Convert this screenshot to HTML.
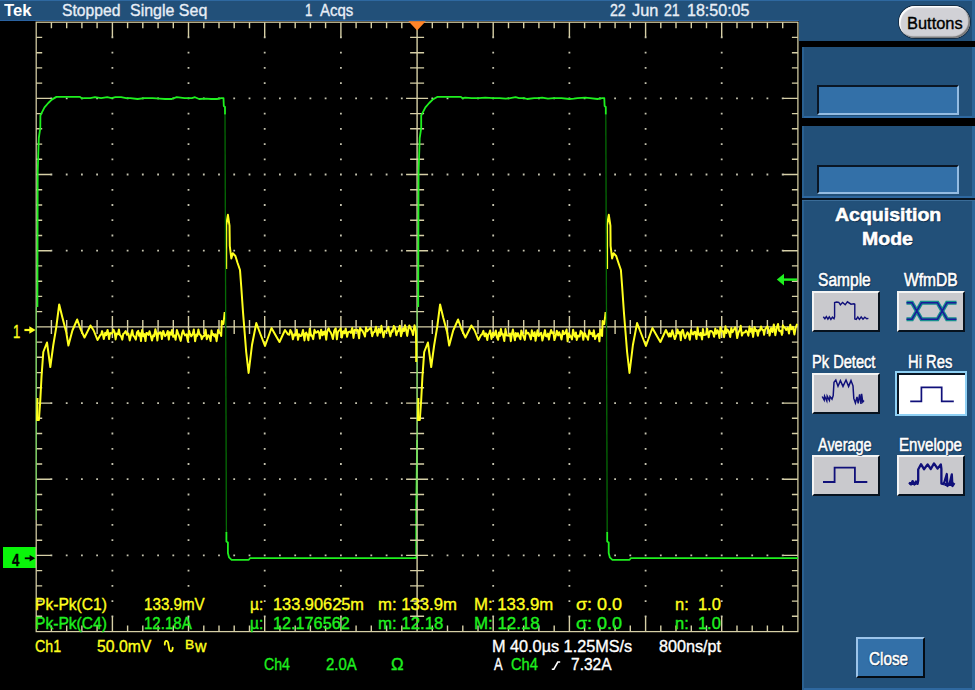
<!DOCTYPE html>
<html lang="en"><head><meta charset="utf-8"><title>Tek scope - Acquisition Mode</title>
<style>
html,body{margin:0;padding:0;background:#000;}
#s{position:relative;width:975px;height:690px;overflow:hidden;background:#000;
font-family:"Liberation Sans","DejaVu Sans",sans-serif;}
#s header,#s main,#s aside{display:block;position:static;margin:0;padding:0;}
#s div,#s span,#s svg{position:absolute;}
.t{white-space:pre;line-height:normal;transform-origin:0 50%;-webkit-text-stroke-width:0.35px;}
.p{background:#225079;box-shadow:inset 2px 0 0 #2a6090,inset -3px 0 0 #2c6598,inset 0 -2px 0 #2e68a0;}
.ph{background:#225079;}
.in{background:#3370a8;border-top:2px solid #0a1624;border-left:2px solid #0a1624;border-bottom:2px solid #94bce2;border-right:2px solid #94bce2;box-sizing:border-box;}
.b{box-sizing:content-box;}
.b svg{left:0;top:0;}
.g{background:#c9c9cd;border-top:2px solid #f4f4f4;border-left:2px solid #f4f4f4;border-bottom:2px solid #07121e;border-right:2px solid #07121e;}
</style></head><body>
<div id="s">
<header>
<div class="ph" style="left:0;top:0;width:975px;height:21.3px;box-shadow:inset 0 1px 0 #2e68a0,inset 0 -1px 0 #2a62a0;"></div>
<span class="t" id="tek" style="left:3.74px;top:1.7px;font-size:16px;color:#fff;font-weight:700;-webkit-text-stroke-width:0;transform:scaleX(1.0385);">Tek</span>
<span class="t" id="stop" style="left:61.52px;top:1.3px;font-size:16.5px;color:#e8eef6;transform:scaleX(0.9500);">Stopped</span>
<span class="t" id="sseq" style="left:129.52px;top:1.3px;font-size:16.5px;color:#e8eef6;transform:scaleX(0.9682);">Single Seq</span>
<span class="t" id="acq0" style="left:304.70px;top:1.3px;font-size:16.5px;color:#e8eef6;transform:scaleX(0.8000);">1</span>
<span class="t" id="acq" style="left:320.23px;top:1.3px;font-size:16.5px;color:#e8eef6;transform:scaleX(0.9041);">Acqs</span>
<span class="t" id="date1" style="left:610.27px;top:1.3px;font-size:16.5px;color:#e8eef6;transform:scaleX(0.8580);">22</span>
<span class="t" id="date2" style="left:632.00px;top:1.3px;font-size:16.5px;color:#e8eef6;transform:scaleX(0.9903);">Jun</span>
<span class="t" id="date3" style="left:663.57px;top:1.3px;font-size:16.5px;color:#e8eef6;transform:scaleX(0.8580);">21</span>
<span class="t" id="date4" style="left:686.83px;top:1.3px;font-size:16.5px;color:#e8eef6;transform:scaleX(0.9721);">18:50:05</span>
</header>
<main>
<div style="left:3px;top:546.8px;width:33px;height:21.6px;background:#0af50a;"></div>
<svg width="975" height="690" viewBox="0 0 975 690" style="left:0;top:0;">
<polyline points="414.1,558.2 416.4,558.2 416.2,552.2 416.2,505 417.1,440" fill="none" stroke="#1ff01f" stroke-width="1.7"/>
<path d="M111.5 37.4h1.8M111.5 52.7h1.8M111.5 67.9h1.8M111.5 83.1h1.8M111.5 98.4h1.8M111.5 113.6h1.8M111.5 128.8h1.8M111.5 144.1h1.8M111.5 159.3h1.8M111.5 174.5h1.8M111.5 189.8h1.8M111.5 205h1.8M111.5 220.2h1.8M111.5 235.5h1.8M111.5 250.7h1.8M111.5 265.9h1.8M111.5 281.2h1.8M111.5 296.4h1.8M111.5 311.6h1.8M111.5 326.9h1.8M111.5 342.1h1.8M111.5 357.3h1.8M111.5 372.6h1.8M111.5 387.8h1.8M111.5 403.1h1.8M111.5 418.3h1.8M111.5 433.5h1.8M111.5 448.8h1.8M111.5 464h1.8M111.5 479.2h1.8M111.5 494.5h1.8M111.5 509.7h1.8M111.5 524.9h1.8M111.5 540.2h1.8M111.5 555.4h1.8M111.5 570.6h1.8M111.5 585.9h1.8M111.5 601.1h1.8M111.5 616.3h1.8M187.6 37.4h1.8M187.6 52.7h1.8M187.6 67.9h1.8M187.6 83.1h1.8M187.6 98.4h1.8M187.6 113.6h1.8M187.6 128.8h1.8M187.6 144.1h1.8M187.6 159.3h1.8M187.6 174.5h1.8M187.6 189.8h1.8M187.6 205h1.8M187.6 220.2h1.8M187.6 235.5h1.8M187.6 250.7h1.8M187.6 265.9h1.8M187.6 281.2h1.8M187.6 296.4h1.8M187.6 311.6h1.8M187.6 326.9h1.8M187.6 342.1h1.8M187.6 357.3h1.8M187.6 372.6h1.8M187.6 387.8h1.8M187.6 403.1h1.8M187.6 418.3h1.8M187.6 433.5h1.8M187.6 448.8h1.8M187.6 464h1.8M187.6 479.2h1.8M187.6 494.5h1.8M187.6 509.7h1.8M187.6 524.9h1.8M187.6 540.2h1.8M187.6 555.4h1.8M187.6 570.6h1.8M187.6 585.9h1.8M187.6 601.1h1.8M187.6 616.3h1.8M263.8 37.4h1.8M263.8 52.7h1.8M263.8 67.9h1.8M263.8 83.1h1.8M263.8 98.4h1.8M263.8 113.6h1.8M263.8 128.8h1.8M263.8 144.1h1.8M263.8 159.3h1.8M263.8 174.5h1.8M263.8 189.8h1.8M263.8 205h1.8M263.8 220.2h1.8M263.8 235.5h1.8M263.8 250.7h1.8M263.8 265.9h1.8M263.8 281.2h1.8M263.8 296.4h1.8M263.8 311.6h1.8M263.8 326.9h1.8M263.8 342.1h1.8M263.8 357.3h1.8M263.8 372.6h1.8M263.8 387.8h1.8M263.8 403.1h1.8M263.8 418.3h1.8M263.8 433.5h1.8M263.8 448.8h1.8M263.8 464h1.8M263.8 479.2h1.8M263.8 494.5h1.8M263.8 509.7h1.8M263.8 524.9h1.8M263.8 540.2h1.8M263.8 555.4h1.8M263.8 570.6h1.8M263.8 585.9h1.8M263.8 601.1h1.8M263.8 616.3h1.8M340 37.4h1.8M340 52.7h1.8M340 67.9h1.8M340 83.1h1.8M340 98.4h1.8M340 113.6h1.8M340 128.8h1.8M340 144.1h1.8M340 159.3h1.8M340 174.5h1.8M340 189.8h1.8M340 205h1.8M340 220.2h1.8M340 235.5h1.8M340 250.7h1.8M340 265.9h1.8M340 281.2h1.8M340 296.4h1.8M340 311.6h1.8M340 326.9h1.8M340 342.1h1.8M340 357.3h1.8M340 372.6h1.8M340 387.8h1.8M340 403.1h1.8M340 418.3h1.8M340 433.5h1.8M340 448.8h1.8M340 464h1.8M340 479.2h1.8M340 494.5h1.8M340 509.7h1.8M340 524.9h1.8M340 540.2h1.8M340 555.4h1.8M340 570.6h1.8M340 585.9h1.8M340 601.1h1.8M340 616.3h1.8M492.3 37.4h1.8M492.3 52.7h1.8M492.3 67.9h1.8M492.3 83.1h1.8M492.3 98.4h1.8M492.3 113.6h1.8M492.3 128.8h1.8M492.3 144.1h1.8M492.3 159.3h1.8M492.3 174.5h1.8M492.3 189.8h1.8M492.3 205h1.8M492.3 220.2h1.8M492.3 235.5h1.8M492.3 250.7h1.8M492.3 265.9h1.8M492.3 281.2h1.8M492.3 296.4h1.8M492.3 311.6h1.8M492.3 326.9h1.8M492.3 342.1h1.8M492.3 357.3h1.8M492.3 372.6h1.8M492.3 387.8h1.8M492.3 403.1h1.8M492.3 418.3h1.8M492.3 433.5h1.8M492.3 448.8h1.8M492.3 464h1.8M492.3 479.2h1.8M492.3 494.5h1.8M492.3 509.7h1.8M492.3 524.9h1.8M492.3 540.2h1.8M492.3 555.4h1.8M492.3 570.6h1.8M492.3 585.9h1.8M492.3 601.1h1.8M492.3 616.3h1.8M568.5 37.4h1.8M568.5 52.7h1.8M568.5 67.9h1.8M568.5 83.1h1.8M568.5 98.4h1.8M568.5 113.6h1.8M568.5 128.8h1.8M568.5 144.1h1.8M568.5 159.3h1.8M568.5 174.5h1.8M568.5 189.8h1.8M568.5 205h1.8M568.5 220.2h1.8M568.5 235.5h1.8M568.5 250.7h1.8M568.5 265.9h1.8M568.5 281.2h1.8M568.5 296.4h1.8M568.5 311.6h1.8M568.5 326.9h1.8M568.5 342.1h1.8M568.5 357.3h1.8M568.5 372.6h1.8M568.5 387.8h1.8M568.5 403.1h1.8M568.5 418.3h1.8M568.5 433.5h1.8M568.5 448.8h1.8M568.5 464h1.8M568.5 479.2h1.8M568.5 494.5h1.8M568.5 509.7h1.8M568.5 524.9h1.8M568.5 540.2h1.8M568.5 555.4h1.8M568.5 570.6h1.8M568.5 585.9h1.8M568.5 601.1h1.8M568.5 616.3h1.8M644.7 37.4h1.8M644.7 52.7h1.8M644.7 67.9h1.8M644.7 83.1h1.8M644.7 98.4h1.8M644.7 113.6h1.8M644.7 128.8h1.8M644.7 144.1h1.8M644.7 159.3h1.8M644.7 174.5h1.8M644.7 189.8h1.8M644.7 205h1.8M644.7 220.2h1.8M644.7 235.5h1.8M644.7 250.7h1.8M644.7 265.9h1.8M644.7 281.2h1.8M644.7 296.4h1.8M644.7 311.6h1.8M644.7 326.9h1.8M644.7 342.1h1.8M644.7 357.3h1.8M644.7 372.6h1.8M644.7 387.8h1.8M644.7 403.1h1.8M644.7 418.3h1.8M644.7 433.5h1.8M644.7 448.8h1.8M644.7 464h1.8M644.7 479.2h1.8M644.7 494.5h1.8M644.7 509.7h1.8M644.7 524.9h1.8M644.7 540.2h1.8M644.7 555.4h1.8M644.7 570.6h1.8M644.7 585.9h1.8M644.7 601.1h1.8M644.7 616.3h1.8M720.8 37.4h1.8M720.8 52.7h1.8M720.8 67.9h1.8M720.8 83.1h1.8M720.8 98.4h1.8M720.8 113.6h1.8M720.8 128.8h1.8M720.8 144.1h1.8M720.8 159.3h1.8M720.8 174.5h1.8M720.8 189.8h1.8M720.8 205h1.8M720.8 220.2h1.8M720.8 235.5h1.8M720.8 250.7h1.8M720.8 265.9h1.8M720.8 281.2h1.8M720.8 296.4h1.8M720.8 311.6h1.8M720.8 326.9h1.8M720.8 342.1h1.8M720.8 357.3h1.8M720.8 372.6h1.8M720.8 387.8h1.8M720.8 403.1h1.8M720.8 418.3h1.8M720.8 433.5h1.8M720.8 448.8h1.8M720.8 464h1.8M720.8 479.2h1.8M720.8 494.5h1.8M720.8 509.7h1.8M720.8 524.9h1.8M720.8 540.2h1.8M720.8 555.4h1.8M720.8 570.6h1.8M720.8 585.9h1.8M720.8 601.1h1.8M720.8 616.3h1.8M50.5 98.4h1.8M65.8 98.4h1.8M81 98.4h1.8M96.2 98.4h1.8M126.7 98.4h1.8M141.9 98.4h1.8M157.2 98.4h1.8M172.4 98.4h1.8M202.9 98.4h1.8M218.1 98.4h1.8M233.3 98.4h1.8M248.6 98.4h1.8M279 98.4h1.8M294.3 98.4h1.8M309.5 98.4h1.8M324.7 98.4h1.8M355.2 98.4h1.8M370.4 98.4h1.8M385.7 98.4h1.8M400.9 98.4h1.8M431.4 98.4h1.8M446.6 98.4h1.8M461.9 98.4h1.8M477.1 98.4h1.8M507.6 98.4h1.8M522.8 98.4h1.8M538 98.4h1.8M553.3 98.4h1.8M583.7 98.4h1.8M599 98.4h1.8M614.2 98.4h1.8M629.4 98.4h1.8M659.9 98.4h1.8M675.1 98.4h1.8M690.4 98.4h1.8M705.6 98.4h1.8M736.1 98.4h1.8M751.3 98.4h1.8M766.5 98.4h1.8M781.8 98.4h1.8M50.5 174.5h1.8M65.8 174.5h1.8M81 174.5h1.8M96.2 174.5h1.8M126.7 174.5h1.8M141.9 174.5h1.8M157.2 174.5h1.8M172.4 174.5h1.8M202.9 174.5h1.8M218.1 174.5h1.8M233.3 174.5h1.8M248.6 174.5h1.8M279 174.5h1.8M294.3 174.5h1.8M309.5 174.5h1.8M324.7 174.5h1.8M355.2 174.5h1.8M370.4 174.5h1.8M385.7 174.5h1.8M400.9 174.5h1.8M431.4 174.5h1.8M446.6 174.5h1.8M461.9 174.5h1.8M477.1 174.5h1.8M507.6 174.5h1.8M522.8 174.5h1.8M538 174.5h1.8M553.3 174.5h1.8M583.7 174.5h1.8M599 174.5h1.8M614.2 174.5h1.8M629.4 174.5h1.8M659.9 174.5h1.8M675.1 174.5h1.8M690.4 174.5h1.8M705.6 174.5h1.8M736.1 174.5h1.8M751.3 174.5h1.8M766.5 174.5h1.8M781.8 174.5h1.8M50.5 250.7h1.8M65.8 250.7h1.8M81 250.7h1.8M96.2 250.7h1.8M126.7 250.7h1.8M141.9 250.7h1.8M157.2 250.7h1.8M172.4 250.7h1.8M202.9 250.7h1.8M218.1 250.7h1.8M233.3 250.7h1.8M248.6 250.7h1.8M279 250.7h1.8M294.3 250.7h1.8M309.5 250.7h1.8M324.7 250.7h1.8M355.2 250.7h1.8M370.4 250.7h1.8M385.7 250.7h1.8M400.9 250.7h1.8M431.4 250.7h1.8M446.6 250.7h1.8M461.9 250.7h1.8M477.1 250.7h1.8M507.6 250.7h1.8M522.8 250.7h1.8M538 250.7h1.8M553.3 250.7h1.8M583.7 250.7h1.8M599 250.7h1.8M614.2 250.7h1.8M629.4 250.7h1.8M659.9 250.7h1.8M675.1 250.7h1.8M690.4 250.7h1.8M705.6 250.7h1.8M736.1 250.7h1.8M751.3 250.7h1.8M766.5 250.7h1.8M781.8 250.7h1.8M50.5 403.1h1.8M65.8 403.1h1.8M81 403.1h1.8M96.2 403.1h1.8M126.7 403.1h1.8M141.9 403.1h1.8M157.2 403.1h1.8M172.4 403.1h1.8M202.9 403.1h1.8M218.1 403.1h1.8M233.3 403.1h1.8M248.6 403.1h1.8M279 403.1h1.8M294.3 403.1h1.8M309.5 403.1h1.8M324.7 403.1h1.8M355.2 403.1h1.8M370.4 403.1h1.8M385.7 403.1h1.8M400.9 403.1h1.8M431.4 403.1h1.8M446.6 403.1h1.8M461.9 403.1h1.8M477.1 403.1h1.8M507.6 403.1h1.8M522.8 403.1h1.8M538 403.1h1.8M553.3 403.1h1.8M583.7 403.1h1.8M599 403.1h1.8M614.2 403.1h1.8M629.4 403.1h1.8M659.9 403.1h1.8M675.1 403.1h1.8M690.4 403.1h1.8M705.6 403.1h1.8M736.1 403.1h1.8M751.3 403.1h1.8M766.5 403.1h1.8M781.8 403.1h1.8M50.5 479.2h1.8M65.8 479.2h1.8M81 479.2h1.8M96.2 479.2h1.8M126.7 479.2h1.8M141.9 479.2h1.8M157.2 479.2h1.8M172.4 479.2h1.8M202.9 479.2h1.8M218.1 479.2h1.8M233.3 479.2h1.8M248.6 479.2h1.8M279 479.2h1.8M294.3 479.2h1.8M309.5 479.2h1.8M324.7 479.2h1.8M355.2 479.2h1.8M370.4 479.2h1.8M385.7 479.2h1.8M400.9 479.2h1.8M431.4 479.2h1.8M446.6 479.2h1.8M461.9 479.2h1.8M477.1 479.2h1.8M507.6 479.2h1.8M522.8 479.2h1.8M538 479.2h1.8M553.3 479.2h1.8M583.7 479.2h1.8M599 479.2h1.8M614.2 479.2h1.8M629.4 479.2h1.8M659.9 479.2h1.8M675.1 479.2h1.8M690.4 479.2h1.8M705.6 479.2h1.8M736.1 479.2h1.8M751.3 479.2h1.8M766.5 479.2h1.8M781.8 479.2h1.8M50.5 555.4h1.8M65.8 555.4h1.8M81 555.4h1.8M96.2 555.4h1.8M126.7 555.4h1.8M141.9 555.4h1.8M157.2 555.4h1.8M172.4 555.4h1.8M202.9 555.4h1.8M218.1 555.4h1.8M233.3 555.4h1.8M248.6 555.4h1.8M279 555.4h1.8M294.3 555.4h1.8M309.5 555.4h1.8M324.7 555.4h1.8M355.2 555.4h1.8M370.4 555.4h1.8M385.7 555.4h1.8M400.9 555.4h1.8M431.4 555.4h1.8M446.6 555.4h1.8M461.9 555.4h1.8M477.1 555.4h1.8M507.6 555.4h1.8M522.8 555.4h1.8M538 555.4h1.8M553.3 555.4h1.8M583.7 555.4h1.8M599 555.4h1.8M614.2 555.4h1.8M629.4 555.4h1.8M659.9 555.4h1.8M675.1 555.4h1.8M690.4 555.4h1.8M705.6 555.4h1.8M736.1 555.4h1.8M751.3 555.4h1.8M766.5 555.4h1.8M781.8 555.4h1.8" stroke="#c4c2ae" stroke-width="1.8" fill="none"/>
<rect x="36.2" y="22.2" width="761.7" height="609.4" fill="none" stroke="#d6cfa6" stroke-width="1.25"/>
<path d="M417.1 22.2V631.6M36.2 326.9H797.9M51.4 22.2v6M51.4 631.6v-6M51.4 319.9v14M66.7 22.2v6M66.7 631.6v-6M66.7 319.9v14M81.9 22.2v6M81.9 631.6v-6M81.9 319.9v14M97.1 22.2v6M97.1 631.6v-6M97.1 319.9v14M112.4 22.2v15M112.4 631.6v-15M112.4 315.9v22M127.6 22.2v6M127.6 631.6v-6M127.6 319.9v14M142.8 22.2v6M142.8 631.6v-6M142.8 319.9v14M158.1 22.2v6M158.1 631.6v-6M158.1 319.9v14M173.3 22.2v6M173.3 631.6v-6M173.3 319.9v14M188.5 22.2v15M188.5 631.6v-15M188.5 315.9v22M203.8 22.2v6M203.8 631.6v-6M203.8 319.9v14M219 22.2v6M219 631.6v-6M219 319.9v14M234.2 22.2v6M234.2 631.6v-6M234.2 319.9v14M249.5 22.2v6M249.5 631.6v-6M249.5 319.9v14M264.7 22.2v15M264.7 631.6v-15M264.7 315.9v22M279.9 22.2v6M279.9 631.6v-6M279.9 319.9v14M295.2 22.2v6M295.2 631.6v-6M295.2 319.9v14M310.4 22.2v6M310.4 631.6v-6M310.4 319.9v14M325.6 22.2v6M325.6 631.6v-6M325.6 319.9v14M340.9 22.2v15M340.9 631.6v-15M340.9 315.9v22M356.1 22.2v6M356.1 631.6v-6M356.1 319.9v14M371.3 22.2v6M371.3 631.6v-6M371.3 319.9v14M386.6 22.2v6M386.6 631.6v-6M386.6 319.9v14M401.8 22.2v6M401.8 631.6v-6M401.8 319.9v14M417.1 22.2v15M417.1 631.6v-15M417.1 315.9v22M432.3 22.2v6M432.3 631.6v-6M432.3 319.9v14M447.5 22.2v6M447.5 631.6v-6M447.5 319.9v14M462.8 22.2v6M462.8 631.6v-6M462.8 319.9v14M478 22.2v6M478 631.6v-6M478 319.9v14M493.2 22.2v15M493.2 631.6v-15M493.2 315.9v22M508.5 22.2v6M508.5 631.6v-6M508.5 319.9v14M523.7 22.2v6M523.7 631.6v-6M523.7 319.9v14M538.9 22.2v6M538.9 631.6v-6M538.9 319.9v14M554.2 22.2v6M554.2 631.6v-6M554.2 319.9v14M569.4 22.2v15M569.4 631.6v-15M569.4 315.9v22M584.6 22.2v6M584.6 631.6v-6M584.6 319.9v14M599.9 22.2v6M599.9 631.6v-6M599.9 319.9v14M615.1 22.2v6M615.1 631.6v-6M615.1 319.9v14M630.3 22.2v6M630.3 631.6v-6M630.3 319.9v14M645.6 22.2v15M645.6 631.6v-15M645.6 315.9v22M660.8 22.2v6M660.8 631.6v-6M660.8 319.9v14M676 22.2v6M676 631.6v-6M676 319.9v14M691.3 22.2v6M691.3 631.6v-6M691.3 319.9v14M706.5 22.2v6M706.5 631.6v-6M706.5 319.9v14M721.7 22.2v15M721.7 631.6v-15M721.7 315.9v22M737 22.2v6M737 631.6v-6M737 319.9v14M752.2 22.2v6M752.2 631.6v-6M752.2 319.9v14M767.4 22.2v6M767.4 631.6v-6M767.4 319.9v14M782.7 22.2v6M782.7 631.6v-6M782.7 319.9v14M36.2 37.4h6M797.9 37.4h-6M410.1 37.4h14M36.2 52.7h6M797.9 52.7h-6M410.1 52.7h14M36.2 67.9h6M797.9 67.9h-6M410.1 67.9h14M36.2 83.1h6M797.9 83.1h-6M410.1 83.1h14M36.2 98.4h15M797.9 98.4h-15M406.1 98.4h22M36.2 113.6h6M797.9 113.6h-6M410.1 113.6h14M36.2 128.8h6M797.9 128.8h-6M410.1 128.8h14M36.2 144.1h6M797.9 144.1h-6M410.1 144.1h14M36.2 159.3h6M797.9 159.3h-6M410.1 159.3h14M36.2 174.5h15M797.9 174.5h-15M406.1 174.5h22M36.2 189.8h6M797.9 189.8h-6M410.1 189.8h14M36.2 205h6M797.9 205h-6M410.1 205h14M36.2 220.2h6M797.9 220.2h-6M410.1 220.2h14M36.2 235.5h6M797.9 235.5h-6M410.1 235.5h14M36.2 250.7h15M797.9 250.7h-15M406.1 250.7h22M36.2 265.9h6M797.9 265.9h-6M410.1 265.9h14M36.2 281.2h6M797.9 281.2h-6M410.1 281.2h14M36.2 296.4h6M797.9 296.4h-6M410.1 296.4h14M36.2 311.6h6M797.9 311.6h-6M410.1 311.6h14M36.2 326.9h15M797.9 326.9h-15M406.1 326.9h22M36.2 342.1h6M797.9 342.1h-6M410.1 342.1h14M36.2 357.3h6M797.9 357.3h-6M410.1 357.3h14M36.2 372.6h6M797.9 372.6h-6M410.1 372.6h14M36.2 387.8h6M797.9 387.8h-6M410.1 387.8h14M36.2 403.1h15M797.9 403.1h-15M406.1 403.1h22M36.2 418.3h6M797.9 418.3h-6M410.1 418.3h14M36.2 433.5h6M797.9 433.5h-6M410.1 433.5h14M36.2 448.8h6M797.9 448.8h-6M410.1 448.8h14M36.2 464h6M797.9 464h-6M410.1 464h14M36.2 479.2h15M797.9 479.2h-15M406.1 479.2h22M36.2 494.5h6M797.9 494.5h-6M410.1 494.5h14M36.2 509.7h6M797.9 509.7h-6M410.1 509.7h14M36.2 524.9h6M797.9 524.9h-6M410.1 524.9h14M36.2 540.2h6M797.9 540.2h-6M410.1 540.2h14M36.2 555.4h15M797.9 555.4h-15M406.1 555.4h22M36.2 570.6h6M797.9 570.6h-6M410.1 570.6h14M36.2 585.9h6M797.9 585.9h-6M410.1 585.9h14M36.2 601.1h6M797.9 601.1h-6M410.1 601.1h14M36.2 616.3h6M797.9 616.3h-6M410.1 616.3h14" stroke="#d6cfa6" stroke-width="1.4" fill="none"/>
<path d="M36.2 307V520" fill="none" stroke="#1ff01f" stroke-width="1.6" opacity="0.38"/>
<path d="M417.1 307V500" fill="none" stroke="#1ff01f" stroke-width="1.6" opacity="0.38"/>
<polyline points="37.5,398 37,420 38.9,420 40.3,400 41.5,377 43.3,352 47,342.5 50.3,367 53.3,345 56.3,327 59.2,304.5 62.4,317.5 66.3,332.5 68.4,345.5 72.4,330.5 77.2,319.5 80.5,329 84.5,337.5 90.5,325.5 93.7,330.5 97.5,340 100.2,335.2 101.1,334.7 102.1,331.1 102.9,334.2 103.8,339.1 105.2,332.8 106.1,335.1 107.6,329.9 109.1,339 110.1,332.9 110.9,333.6 112.3,333 113.5,329.7 114.7,332.5 115.6,339.4 116.7,333.6 117.9,334.3 118.9,329.4 119.8,334.8 121,336.2 122.3,339.6 123.2,334.1 124.5,332.9 125.7,331.1 127,334.8 128.4,333.6 129.7,340.4 130.8,336.1 132.3,330.1 133.1,335.4 134.4,336.8 135.8,339.6 137,332.3 138.2,330.8 139,335.7 139.9,333.3 141,341.1 142.1,329.9 143.4,336.2 144.4,334.1 145.5,341.1 146.4,333 147.4,333.3 148.5,334.9 149.5,331.2 150.5,334.8 152,340.6 153.2,335.3 154.1,336.3 155.4,329.2 156.5,334 157.4,340.5 158.2,333.2 159.1,333.8 160,332.2 160.9,332.7 161.9,339 163.2,330.9 164.2,333.9 165.1,336.1 166.6,334.3 167.7,331 168.8,339.6 169.7,332.3 171.1,334.6 172,330 173.2,336.7 174.6,335.4 175.6,339.8 176.9,330 178,333.2 179.3,336.7 180.7,340.9 182.1,333.2 183.2,330.4 184,333.5 185,335.4 186.5,334.3 187.9,341.4 189,330.7 189.9,333.1 191.2,336.3 192.6,334.4 193.8,329.4 195.1,341.2 196.4,334.4 197.3,335.8 198.4,329.4 199.4,334 200.9,335.5 201.8,339.2 203.3,335.9 204.2,336 205.6,329.7 206.8,339.2 208.3,335.2 209.5,336.5 210.6,341.1 211.5,330.6 212.5,334.9 213.5,334.1 214.4,336.4 215.4,334.3 216.6,341.2 218.1,330 219.2,332.3 220.3,333 221.2,336 221.8,321 223.4,324 224.1,318 224.7,312" fill="none" stroke="#ffff1e" stroke-width="2" stroke-linejoin="round"/>
<polyline points="226.2,269 226.3,225 227.9,214.8 229.5,225.6 229.8,246 231.3,258.5 232.8,253.3 235.4,256 237.6,263 240,270 241.2,286 243,312 244.6,332 246.2,352 248.6,373 252,345 256.3,323 260,333 265,346 271.5,328 276,336 279.5,342 285,330 288,334.4 289.3,334.7 290.3,329.9 291.7,332.5 292.9,339.3 294.2,334.3 295.4,335.4 296.8,329.8 298,339.8 299.1,334.2 300.3,336 301.5,335.7 303,330 304.5,340.4 305.3,333.6 306.2,332.6 307.1,334.5 308.4,340.3 309.7,328.8 311.1,335.7 312.1,335.6 313.2,339.1 314.5,329.8 315.7,332.7 316.6,332.5 317.9,331.1 319.1,333 319.9,338.5 321.1,329.7 322.4,335.3 323.3,332 324.1,334.4 325.1,331.3 326.2,339.7 327.2,331.3 328.7,328.3 329.5,330.8 330.8,332.5 331.7,334.8 332.9,339.1 334.3,330.7 335.7,328.3 336.9,339.3 337.8,332.7 338.7,330.7 339.7,330.4 340.6,328.4 341.9,337.5 342.9,331.6 343.7,331.2 344.5,333.3 345.7,328.5 347.1,336.8 348.2,332.1 349.6,331.6 350.8,332.9 352.2,327.9 353.5,337.9 354.6,329.8 355.5,329.9 356.8,330.7 357.7,329.8 359.1,338.3 360.1,327.8 361.2,330 362.3,330.5 363.8,333.7 365,336.5 366,327.3 367.1,331.3 368.2,330 369.4,329 370.4,327.8 371.2,329 372.2,336.2 373.4,332.3 374.6,332.1 376,326.8 377.5,335.7 378.8,328.8 380.2,332.7 381.4,325.8 382.3,330.9 383.5,337.2 384.8,331.1 386.3,331.5 387.6,329.3 388.4,326.9 389.2,332.1 390.4,336.4 391.7,330.4 392.5,331.8 393.8,325.9 395.1,328.3 396.4,335.3 397.4,331.2 398.3,331.3 399.8,325.7 401,336.2 402.2,330.7 403.1,328.4 404,331.1 405,325.3 405.9,328.8 407.2,335.9 408.2,329.8 409.3,325.4 410.7,328.3 412.2,331.6 413,335.1 414.5,325.2 415.9,331 416.2,346 416.2,362" fill="none" stroke="#ffff1e" stroke-width="2" stroke-linejoin="round"/>
<polyline points="418.4,398 417.9,420 419.8,420 421.2,400 422.4,377 424.2,352 427.9,342.5 431.2,367 434.2,345 437.2,327 440.1,304.5 443.2,317.5 447.2,332.5 449.2,345.5 453.2,330.5 458.1,319.5 461.4,329 465.4,337.5 471.4,325.5 474.6,330.5 478.4,340 481.1,334.9 481.9,334.6 483.4,330.9 484.6,336.3 485.9,333.3 487.3,340.1 488.1,334.5 489.2,333.6 490.1,330.4 491.5,338.9 492.9,332.8 494.3,335.5 495.8,330.5 496.8,336.8 498.1,339.8 499,332.4 499.9,336 500.9,329 501.9,334.6 502.8,333.9 504.3,341.1 505.5,329.1 506.7,335.5 507.6,335.6 508.7,335.7 509.9,333.5 510.8,341.2 511.9,333.8 512.9,329.5 513.9,335.2 514.9,340.3 515.8,332.9 516.8,336.4 517.9,333.2 519.3,336.8 520.5,339.2 521.3,330.4 522.3,333.4 523.5,336.3 524.8,339.9 526,330.3 526.8,333.5 528.3,332.8 529.5,335.1 530.9,339.4 531.8,330.3 533.3,336.1 534.7,332.3 535.5,340.7 536.7,334.9 537.5,330.3 538.8,336.1 540.3,333.3 541.2,332.9 542.4,340.6 543.7,335.2 545,330.1 545.8,335.8 546.8,336.4 548,333.6 548.9,339.5 550.2,332.7 551.1,330 552.1,333.2 553.4,332.2 554.4,340.1 555.6,336.3 556.8,330.7 558.2,335.4 559.2,332.3 560.4,335.3 561.5,339.5 562.9,330.7 564,334.1 565.3,333.1 566.6,329.5 567.6,341.3 568.9,333.3 569.9,335.7 570.9,336.6 572,339.4 573.1,329.7 574,334 575,336.7 575.9,332.4 576.7,339.9 578.1,335.6 579.6,336.5 580.7,330.8 582,332.3 583.3,339.8 584.3,333 585.1,333.5 586.1,336.6 587,336.6 588,339.8 589.3,330.2 590.5,333.9 591.9,333.1 593,336.3 593.8,330.3 595.1,339 596,336.4 597,335.6 598.4,333.8 599.4,341.3 600.4,329.6 601.4,332.2 602.1,336 602.6,321 604.2,324 605,318 605.6,312" fill="none" stroke="#ffff1e" stroke-width="2" stroke-linejoin="round"/>
<polyline points="607.1,269 607.1,225 608.8,214.8 610.4,225.6 610.6,246 612.1,258.5 613.6,253.3 616.2,256 618.5,263 620.9,270 622.1,286 623.9,312 625.5,332 627.1,352 629.5,373 632.9,345 637.1,323 640.9,333 645.9,346 652.4,328 656.9,336 660.4,342 665.9,330 668.9,336.5 669.7,333.2 670.8,336.5 672.3,330.2 673.4,334.3 674.8,339.1 676.1,335.6 677.5,329.4 678.5,333.4 679.8,332.1 680.8,340.2 681.6,331.8 682.8,329.8 684.2,336 685.2,338.3 686.4,334.7 687.5,332.4 688.6,334.1 689.8,339.8 691.1,329.9 692.1,333.7 693.2,334.5 694.1,332.2 695.1,331.7 696.5,339.1 697.6,327.6 698.5,334.5 699.8,335.3 700.7,332.9 702.1,339.5 702.9,328.9 703.8,335.1 705,334.8 706.1,334.5 707.2,328.8 708.7,337.3 709.9,331.3 710.9,330.9 711.9,331.4 713.1,333.1 714.1,336.8 715.3,328.6 716.3,333.7 717.5,330.2 718.3,331.7 719.5,338.1 720.4,327.2 721.4,331.2 722.9,331.1 724.1,337.2 725.5,326.3 726.4,332.9 727.4,329.5 728.8,331.4 730.2,337.1 731.3,327.9 732.5,332.2 733.9,329.6 735.2,327.3 736.1,330.4 737.2,338 738.4,332.7 739.8,329.8 740.7,325.7 741.9,335.6 742.9,332.9 744.2,332.5 745.1,332.3 746,330.5 747.4,332.4 748.4,335.7 749.5,326.6 750.5,331.7 751.9,328.5 753.1,336.9 754.5,326.9 755.7,331 756.7,330 757.9,335.8 759,330 759.8,330.8 761,326.4 762.3,330 763.3,330 764.1,334.8 765,329.8 766.2,327.9 767.4,326.4 768.7,329.9 769.6,335.5 771.1,328.1 772.5,332 773.8,324.4 775.3,335.2 776.7,327.9 778,324 779.1,330.6 780,331.2 781,330.7 781.9,334.9 782.8,325.3 783.9,327 784.8,327.6 786.2,329.9 787.7,327.5 789,333.6 790.3,324.7 791.5,329.2 792.9,326.9 794.4,334.6 795.7,327.5 797.2,323.9" fill="none" stroke="#ffff1e" stroke-width="2" stroke-linejoin="round"/>
<polyline points="225,114.5 226.4,533" fill="none" stroke="#056a05" stroke-width="1.3"/>
<polyline points="605.8,114.5 607.2,533" fill="none" stroke="#056a05" stroke-width="1.3"/>
<polyline points="37.4,307 37.7,172 38.8,138 40.3,128 40.4,115.5 41.8,112.6 44.5,107.4 48.3,103 51.8,99.6 56.4,96.9 80,96.9 81.7,98.4 84.2,98.1 90.2,98.1 95,97.2 101.1,98.1 107.2,97.2 111.5,98.1 115.4,97.2 121.1,97.2 126.1,98.1 130.3,98.1 137.6,99 144.3,98.1 148.1,98.1 152.6,98.1 159.7,98.6 165.1,99 171.7,99 176.7,97.2 184.5,98.1 191.9,98.1 195,97.2 199.1,99 206,98.6 211.1,99 217,99 221.5,98.1 223.5,98.1 223.8,106 225,107 225,114.5" fill="none" stroke="#1ff01f" stroke-width="1.8" stroke-linejoin="round"/>
<polyline points="226.4,532 226.4,541.5 227.9,542.5 227.9,553 229,557.3 231.6,559.8 248.8,559.8 250,558.2 416.4,558.2" fill="none" stroke="#1ff01f" stroke-width="1.8" stroke-linejoin="round"/>
<polyline points="418.2,307 418.6,172 419.7,138 421.2,128 421.2,115.5 422.7,112.6 425.4,107.4 429.2,103 432.7,99.6 437.2,96.9 460.9,96.9 462.6,98.4 465.1,97.6 471.5,98.1 478.7,98.1 485.2,97.6 493.1,98.1 499.6,98.1 505.8,98.6 510.2,98.1 515.6,97.2 519.1,98.1 524.1,98.1 527.2,99 534.1,98.1 537.3,98.1 542.2,97.6 547.9,98.6 553.5,98.1 558,98.1 561.5,98.1 569.3,99 573.7,98.6 577.5,98.1 585.4,97.6 590,98.1 597.5,99 602.3,98.1 604.3,98.1 604.6,106 605.8,107 605.8,114.5" fill="none" stroke="#1ff01f" stroke-width="1.8" stroke-linejoin="round"/>
<polyline points="607.2,532 607.2,541.5 608.7,542.5 608.7,553 609.8,557.3 612.4,559.8 629.6,559.8 630.8,558.2 797.9,558.2" fill="none" stroke="#1ff01f" stroke-width="1.8" stroke-linejoin="round"/>
<path d="M408.4 21.2h17.4l-8.7 9.3z" fill="#ff8428"/>
<path d="M797 279.6H782" fill="none" stroke="#1ff01f" stroke-width="2.4"/><path d="M776.8 279.6L784 273.7V285.5z" fill="#1ff01f"/>
<path d="M24.4 330H31" fill="none" stroke="#ffff1e" stroke-width="2.2"/><path d="M29.3 326.2L35.6 330 29.3 333.8z" fill="#ffff1e"/>
<path d="M24.8 558.3H31" fill="none" stroke="#000" stroke-width="1.8"/><path d="M29.6 555L35.2 558.3 29.6 561.6z" fill="#000"/>
<path d="M164.8 644.6C164.6 640.2 167.6 639.6 168.2 643.2L169.2 649C169.8 652.6 172.8 652 172.7 647.6" fill="none" stroke="#ffff1e" stroke-width="1.8" stroke-linecap="round"/>
<path d="M551.8 669.2h2l4-7.2h2.4" fill="none" stroke="#fff" stroke-width="1.6"/>
</svg>
<span class="t" id="m1a" style="left:34.82px;top:594.5px;font-size:16.5px;color:#ffff1e;transform:scaleX(0.9459);">Pk-Pk(C1)</span>
<span class="t" id="m1b" style="left:144.08px;top:594.5px;font-size:16.5px;color:#ffff1e;transform:scaleX(0.9195);">133.9mV</span>
<span class="t" id="m1c" style="left:250.06px;top:594.5px;font-size:16.5px;color:#ffff1e;transform:scaleX(0.9362);">&#181;:</span>
<span class="t" id="m1d" style="left:273.01px;top:594.5px;font-size:16.5px;color:#ffff1e;transform:scaleX(0.9916);">133.90625m</span>
<span class="t" id="m1e" style="left:377.99px;top:594.5px;font-size:16.5px;color:#ffff1e;transform:scaleX(1.0132);">m: 133.9m</span>
<span class="t" id="m1f" style="left:473.73px;top:594.5px;font-size:16.5px;color:#ffff1e;transform:scaleX(1.0165);">M: 133.9m</span>
<span class="t" id="m1g" style="left:576.45px;top:594.5px;font-size:16.5px;color:#ffff1e;transform:scaleX(1.0909);">&#963;: 0.0</span>
<span class="t" id="m1h" style="left:675.00px;top:594.5px;font-size:16.5px;color:#ffff1e;transform:scaleX(1.0000);">n:&nbsp; 1.0</span>
<span class="t" id="m2a" style="left:34.82px;top:614.2px;font-size:16.5px;color:#1ff01f;transform:scaleX(0.9459);">Pk-Pk(C4)</span>
<span class="t" id="m2b" style="left:144.09px;top:614.2px;font-size:16.5px;color:#1ff01f;transform:scaleX(0.9126);">12.18A</span>
<span class="t" id="m2c" style="left:250.06px;top:614.2px;font-size:16.5px;color:#1ff01f;transform:scaleX(0.9362);">&#181;:</span>
<span class="t" id="m2d" style="left:273.02px;top:614.2px;font-size:16.5px;color:#1ff01f;transform:scaleX(0.9836);">12.176562</span>
<span class="t" id="m2e" style="left:377.98px;top:614.2px;font-size:16.5px;color:#1ff01f;transform:scaleX(1.0199);">m: 12.18</span>
<span class="t" id="m2f" style="left:473.72px;top:614.2px;font-size:16.5px;color:#1ff01f;transform:scaleX(1.0240);">M: 12.18</span>
<span class="t" id="m2g" style="left:576.45px;top:614.2px;font-size:16.5px;color:#1ff01f;transform:scaleX(1.0909);">&#963;: 0.0</span>
<span class="t" id="m2h" style="left:675.00px;top:614.2px;font-size:16.5px;color:#1ff01f;transform:scaleX(1.0000);">n:&nbsp; 1.0</span>
<span class="t" id="c1a" style="left:35.35px;top:637.4px;font-size:16.5px;color:#ffff1e;transform:scaleX(0.8621);">Ch1</span>
<span class="t" id="c1b" style="left:96.52px;top:637.4px;font-size:16.5px;color:#ffff1e;transform:scaleX(0.9558);">50.0mV</span>
<span class="t" id="c1d" style="left:185.20px;top:637.4px;font-size:13px;color:#ffff1e;transform:scaleX(1.0667);">B</span>
<span class="t" id="c1e" style="left:194.74px;top:637.4px;font-size:16.5px;color:#ffff1e;transform:scaleX(0.9600);">w</span>
<span class="t" id="c4a" style="left:264.36px;top:655.1px;font-size:16.5px;color:#1ff01f;transform:scaleX(0.8547);">Ch4</span>
<span class="t" id="c4b" style="left:325.55px;top:655.1px;font-size:16.5px;color:#1ff01f;transform:scaleX(0.9037);">2.0A</span>
<span class="t" id="c4c" style="left:390.99px;top:655.1px;font-size:16.5px;color:#1ff01f;transform:scaleX(1.0222);">&#937;</span>
<span class="t" id="h1" style="left:492.27px;top:637.4px;font-size:16.5px;color:#fff;transform:scaleX(0.9840);">M 40.0&#181;s 1.25MS/s</span>
<span class="t" id="h2" style="left:658.51px;top:637.4px;font-size:16.5px;color:#fff;transform:scaleX(0.9801);">800ns/pt</span>
<span class="t" id="t1" style="left:493.70px;top:655.1px;font-size:16.5px;color:#fff;transform:scaleX(0.7826);">A</span>
<span class="t" id="t2" style="left:511.33px;top:655.1px;font-size:16.5px;color:#1ff01f;transform:scaleX(0.8889);">Ch4</span>
<span class="t" id="t4" style="left:571.29px;top:655.1px;font-size:16.5px;color:#fff;transform:scaleX(0.9412);">7.32A</span>
<span class="t" id="n1" style="left:12.75px;top:322.2px;font-size:17.5px;color:#ffff1e;transform:scaleX(0.7500);">1</span>
<span class="t" id="n4" style="left:12.30px;top:550.6px;font-size:17px;color:#000;font-weight:600;transform:scaleX(0.7789);">4</span>
</main>
<aside>
<div class="ph" style="left:799px;top:0;width:176px;height:41px;box-shadow:inset -3px 0 0 #2c6598,inset 0 1px 0 #2e68a0;"></div>
<div class="p" style="left:801.5px;top:46.8px;width:173.5px;height:71.7px;"></div>
<div class="p" style="left:801.5px;top:126.2px;width:173.5px;height:563.8px;"></div>
<div style="left:801.5px;top:196px;width:173.5px;height:1.6px;background:#2e68a0;"></div>
<div style="left:801.5px;top:197.5px;width:173.5px;height:2px;background:#081420;"></div>
<div style="left:801.5px;top:199.5px;width:173.5px;height:1px;background:#3a6c98;"></div>
<div class="in" style="left:817px;top:85.2px;width:142.2px;height:29.4px;"></div>
<div class="in" style="left:817px;top:164.8px;width:142.2px;height:29.2px;"></div>
<div style="left:898.5px;top:5.5px;width:71px;height:32px;border-radius:16px;background:#d1d1d6;box-shadow:inset 1.5px 1.5px 1px #fff,inset -1.5px -1.5px 1px #777,0 0 0 1px #142c44;"></div>
<div class="b g" style="left:812px;top:291px;width:64px;height:37px;"><svg width="64" height="37" viewBox="2 2 64 37"><path transform="translate(1.6 1)" d="M9.7 24.8l1.6 2 1.4-2.2 1.6 2.6 1.4-2.4 1.6 2.6 1.5-2.2 1.6 1.6 0.6-2V10.6l2.2-.6 2 .4 1.6 2.4 2.2-2.4 2.6 2.4 2.2-3 3.6 2.4 3-.4 .8.4V27l1.4.4 1.6-2.4 1.6 2.4 1.8-2.4 1.8 2.2 1.8-2 2 1.6 1.6-.4" fill="none" stroke="#10107a" stroke-width="1.4"/></svg></div>
<div class="b g" style="left:897px;top:291px;width:64px;height:37px;"><svg width="64" height="37" viewBox="2 2 64 37"><path d="M9.5 11.7H15L24.5 28.2H40.5L50 11.7H59.5M9.5 28.2H15L24.5 11.7H40.5L50 28.2H59.5" fill="none" stroke="#178f8f" stroke-width="4"/><path d="M9.5 11.7H15L24.5 28.2H40.5L50 11.7H59.5M9.5 28.2H15L24.5 11.7H40.5L50 28.2H59.5" fill="none" stroke="#1a1a9a" stroke-width="1.6"/></svg></div>
<div class="b g" style="left:812px;top:373px;width:64px;height:37px;"><svg width="64" height="37" viewBox="2 2 64 37"><path d="M10.2 23.5l2 3.6 .4-3.8 2.2 4.6 .4-4.8 2.2 4.2 .6-3.8 2 2.6 1.2-3.4 .8-13.5 1.8-2.2 2.2 6.2 2.4-5.6 2.6 5.8 3-6.4 2.6 6.4 2.4-5.8 2 5.2 .8 12.6 1.6 4.6 1.6-6 1.2 6.4 1.4-9 1.4 9.6 .6-10.2 1.2 8.2 1.2-1.4" fill="none" stroke="#10107a" stroke-width="1.5"/></svg></div>
<div class="b" style="left:895px;top:371px;width:68px;height:41px;background:#fff;border:2px solid #8fd0f4;box-shadow:inset 2px 2px 0 #0a1624;"><svg width="68" height="41" viewBox="2 2 68 41"><path d="M15.2 30.4H26.4V16.3H46.7V30.4H58.8" fill="none" stroke="#10107a" stroke-width="1.7"/></svg></div>
<div class="b g" style="left:812px;top:455px;width:64px;height:37px;"><svg width="64" height="37" viewBox="2 2 64 37"><path d="M11 27H22.6V12.6H42.9V27H55.3" fill="none" stroke="#10107a" stroke-width="1.8"/></svg></div>
<div class="b g" style="left:897px;top:455px;width:64px;height:37px;"><svg width="64" height="37" viewBox="2 2 64 37"><path d="M12 27.5l2 2 1.6-3.4 1.8 3.4 1.6-3 1.6 2.4 .6-3.4V14.5l2.8-5.3 3 5 3.6-4.8 3.2 4.6 3.2-5.6 3.6 5.2 3.2-4.2 .6 4.6V28.5l2.4.5 3-10 .6 12 2.4-3 2-8.6 .6 11.6 2-3" fill="none" stroke="#10107a" stroke-width="2.3" stroke-linejoin="round"/><path d="M12.5 28.5h7M47.5 29.5h9" fill="none" stroke="#10107a" stroke-width="3"/></svg></div>
<div style="left:856px;top:637px;width:65px;height:37px;background:#3370a8;border-top:2px solid #9cc4ea;border-left:2px solid #9cc4ea;border-bottom:2px solid #050c14;border-right:2px solid #050c14;"></div>
<span class="t" id="btn" style="left:906.76px;top:13.6px;font-size:16.5px;color:#000;transform:scaleX(0.9954);">Buttons</span>
<span class="t" id="aq1" style="left:835.00px;top:203.9px;font-size:18.5px;color:#fff;font-weight:700;text-shadow:1px 1px 0 #12304e,0 0 2px #0e2a46;-webkit-text-stroke-width:0.55px;transform:scaleX(1.0550);">Acquisition</span>
<span class="t" id="aq2" style="left:862.45px;top:228.3px;font-size:18.5px;color:#fff;font-weight:700;text-shadow:1px 1px 0 #12304e,0 0 2px #0e2a46;-webkit-text-stroke-width:0.55px;transform:scaleX(1.0532);">Mode</span>
<span class="t" id="l1" style="left:818.06px;top:270px;font-size:17.5px;color:#fff;text-shadow:1px 1px 0 #12304e,0 0 2px #0e2a46;-webkit-text-stroke-width:0.55px;transform:scaleX(0.8889);">Sample</span>
<span class="t" id="l2" style="left:903.72px;top:270px;font-size:17.5px;color:#fff;text-shadow:1px 1px 0 #12304e,0 0 2px #0e2a46;-webkit-text-stroke-width:0.55px;transform:scaleX(0.8917);">WfmDB</span>
<span class="t" id="l3" style="left:812.45px;top:352.2px;font-size:17.5px;color:#fff;text-shadow:1px 1px 0 #12304e,0 0 2px #0e2a46;-webkit-text-stroke-width:0.55px;transform:scaleX(0.8361);">Pk Detect</span>
<span class="t" id="l4" style="left:907.95px;top:352.2px;font-size:17.5px;color:#fff;text-shadow:1px 1px 0 #12304e,0 0 2px #0e2a46;-webkit-text-stroke-width:0.55px;transform:scaleX(0.8431);">Hi Res</span>
<span class="t" id="l5" style="left:818.21px;top:434.5px;font-size:17.5px;color:#fff;text-shadow:1px 1px 0 #12304e,0 0 2px #0e2a46;-webkit-text-stroke-width:0.55px;transform:scaleX(0.8263);">Average</span>
<span class="t" id="l6" style="left:898.92px;top:434.5px;font-size:17.5px;color:#fff;text-shadow:1px 1px 0 #12304e,0 0 2px #0e2a46;-webkit-text-stroke-width:0.55px;transform:scaleX(0.8632);">Envelope</span>
<span class="t" id="cl" style="left:868.88px;top:647.7px;font-size:18.5px;color:#fff;text-shadow:1px 1px 0 #12304e,0 0 2px #0e2a46;-webkit-text-stroke-width:0.55px;transform:scaleX(0.8261);">Close</span>
</aside>
</div></body></html>
